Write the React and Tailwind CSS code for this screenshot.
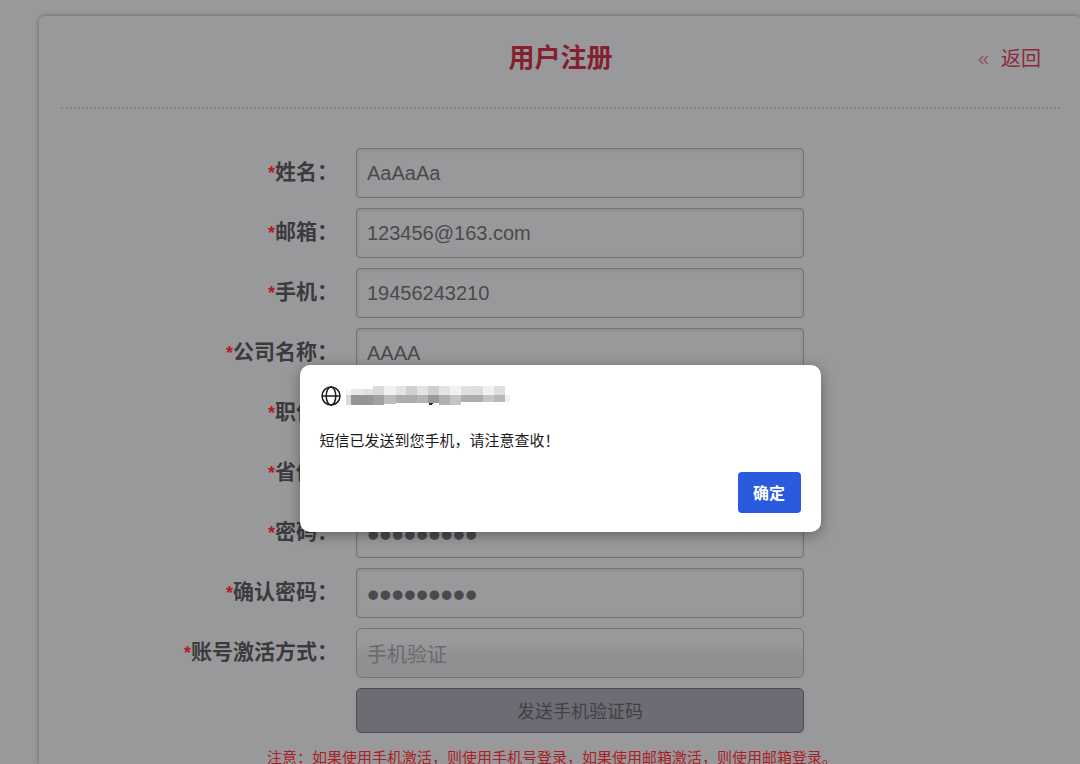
import { useState } from "react";

const fields = [
  { id: "name", label: "姓名", type: "text", value: "AaAaAa" },
  { id: "email", label: "邮箱", type: "text", value: "123456@163.com" },
  { id: "phone", label: "手机", type: "text", value: "19456243210" },
  { id: "company", label: "公司名称", type: "text", value: "AAAA" },
  { id: "position", label: "职位", type: "text", value: "" },
  { id: "province", label: "省份", type: "text", value: "" },
  { id: "password", label: "密码", type: "password", value: "123456789" },
  { id: "confirm", label: "确认密码", type: "password", value: "123456789" },
];

// [x, width, top row colour, bottom row colour, top row start, bottom row end]
const blocks = [
  [0, 5, "#f4f4f4", "#d9d9d9", 5, 20],
  [5, 11, "#e9e9e9", "#959596", 4, 20],
  [16, 11, "#e2e2e2", "#959596", 4, 20],
  [27, 11, "#dadada", "#a1a1a1", 1, 20],
  [38, 12, "#f1f1f1", "#bcbcbc", 1, 19],
  [50, 10, "#e3e3e3", "#aeaeae", 1, 18],
  [60, 11, "#d0d0d0", "#acacac", 1, 18],
  [71, 11, "#e4e4e4", "#b4b4b4", 1, 18],
  [82, 11, "#cecece", "#999999", 1, 18],
  [93, 11, "#e4e4e4", "#b0b0b0", 1, 20],
  [104, 11, "#f2f2f2", "#c4c4c4", 1, 20],
  [115, 11, "#e0e0e0", "#adadad", 1, 17],
  [126, 11, "#dedede", "#adadad", 1, 17],
  [137, 11, "#f1f1f1", "#c4c4c4", 1, 17],
  [148, 11, "#dedede", "#b8b8b8", 1, 17],
  [159, 5, "#ffffff", "#f1f1f1", 2, 17],
];

function RequiredLabel({ id, children }) {
  return (
    <label
      htmlFor={id}
      className="flex h-[50px] items-start justify-end whitespace-nowrap text-[21px] font-bold text-[#3b3b3e]"
    >
      <span className="pt-3 font-['Liberation_Sans',sans-serif] text-[18px] leading-[26px] text-[#b01c22]">
        *
      </span>
      <span className="leading-[44px]">{children}：</span>
    </label>
  );
}

const boxStyle =
  "block h-[50px] w-full border border-[#737375] bg-[#99999b] px-[10px] text-[#4a4a4d] shadow-[inset_0_1px_3px_rgba(0,0,0,0.12)] outline-none";

function Field({ id, label, type, value }) {
  const [text, setText] = useState(value);
  return (
    <>
      <RequiredLabel id={id}>{label}</RequiredLabel>
      <input
        id={id}
        type={type}
        value={text}
        onChange={(e) => setText(e.target.value)}
        className={`${boxStyle} rounded-[4px] font-['Liberation_Sans',sans-serif] ${
          type === "password" ? "pt-1 text-[35px]" : "text-[20px]"
        }`}
      />
      <span />
    </>
  );
}

function GlobeIcon() {
  return (
    <svg width="20" height="20" viewBox="0 0 20 20" fill="none" stroke="#1b1b1d" strokeWidth="1.5" aria-hidden="true">
      <circle cx="10" cy="10" r="9" />
      <ellipse cx="10" cy="10" rx="4.8" ry="9" />
      <path d="M1 10h18" />
    </svg>
  );
}

function MaskedHost() {
  return (
    <svg width="164" height="21" viewBox="0 0 164 21" shapeRendering="crispEdges" aria-hidden="true">
      {blocks.map(([x, w, top, bottom, start, end]) => (
        <g key={x}>
          <rect x={x} y={start} width={w} height={10 - start} fill={top} />
          <rect x={x} y="10" width={w} height={end - 10} fill={bottom} />
        </g>
      ))}
      <path d="M83 18h4l-2 2h-2z" fill="#222" />
    </svg>
  );
}

export default function App() {
  const [open, setOpen] = useState(true);
  return (
    <div className="relative h-screen overflow-hidden bg-[#99999b] pt-4 pl-[39px] font-['Noto_Sans_CJK_SC',sans-serif]">
      <main className="-mr-[2px] h-full rounded-t-[6px] bg-[#99999b] px-[22px] shadow-[0_0_5px_rgba(0,0,0,0.35)]">
        <header className="grid h-[93px] grid-cols-[1fr_auto_1fr] items-start border-b-2 border-dotted border-[#858588] pt-5">
          <span />
          <h1 className="text-[26px] leading-[40px] font-bold text-[#84202f]">用户注册</h1>
          <a
            href="#back"
            className="flex items-center justify-self-end pr-[19px] text-[20px] leading-[44px] text-[#8c2a3b]"
          >
            <span className="pr-3 font-['Liberation_Sans',sans-serif] text-[#8f5260]">«</span>
            返回
          </a>
        </header>

        <form
          onSubmit={(e) => e.preventDefault()}
          className="grid grid-cols-[277fr_448fr_238fr] gap-x-[18px] gap-y-[10px] pt-[39px]"
        >
          {fields.map((field) => (
            <Field key={field.id} {...field} />
          ))}
          <RequiredLabel id="activation">账号激活方式</RequiredLabel>
          <select
            id="activation"
            className="block h-[50px] w-full appearance-none rounded-[6px] border border-[#737375] bg-linear-to-b from-[#99999b] from-30% to-[#909092] to-55% px-[10px] pt-[2px] text-[20px] text-[#6a6a6d] outline-none"
          >
            <option>手机验证</option>
            <option>邮箱验证</option>
          </select>
          <span />
          <button
            type="button"
            onClick={() => setOpen(true)}
            className="col-start-2 h-[45px] rounded-[5px] border border-[#4c4b52] bg-[#6d6c75] text-[18px] text-[#414144]"
          >
            发送手机验证码
          </button>
        </form>
        <p className="pt-[13px] pl-[206px] text-[15px] leading-[22px] whitespace-nowrap text-[#ab1e26]">
          注意：如果使用手机激活，则使用手机号登录，如果使用邮箱激活，则使用邮箱登录。
        </p>
      </main>

      {open && (
        <div className="absolute inset-0 flex items-start justify-center pt-[365px] pl-10">
          <div
            role="alertdialog"
            aria-modal="true"
            aria-labelledby="message"
            className="flex w-[521px] flex-col rounded-[10px] bg-white px-5 pt-5 pb-[19px] shadow-[0_3px_14px_rgba(0,0,0,0.35)]"
          >
            <div className="flex items-center gap-[5px] pl-px">
              <GlobeIcon />
              <MaskedHost />
            </div>
            <p id="message" className="pt-[22px] text-[15px] leading-[24px] text-[#1b1b1d]">
              短信已发送到您手机，请注意查收！
            </p>
            <button
              type="button"
              onClick={() => setOpen(false)}
              className="mt-5 h-[41px] w-[63px] self-end rounded-[4px] bg-[#2a5bdf] pb-[2px] text-[16px] font-bold text-white"
            >
              确定
            </button>
          </div>
        </div>
      )}
    </div>
  );
}
